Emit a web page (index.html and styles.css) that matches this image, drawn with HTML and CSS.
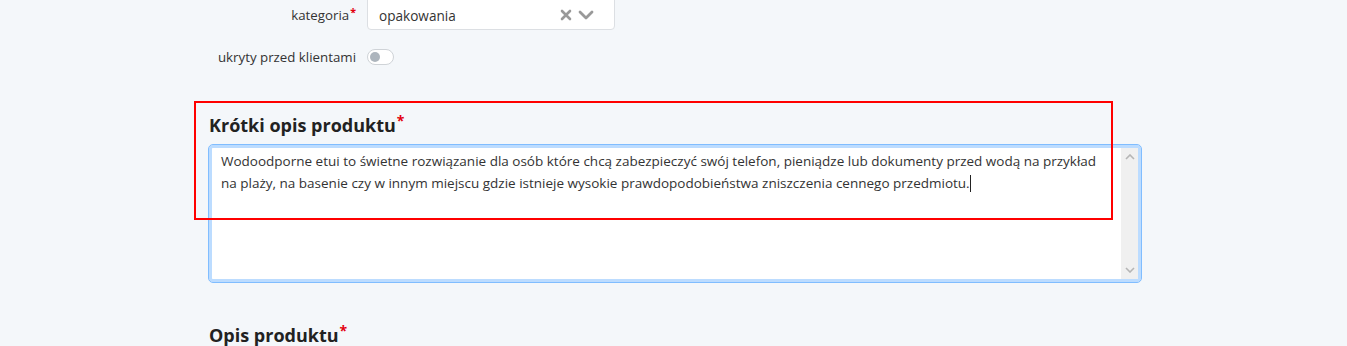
FILE: index.html
```html
<!DOCTYPE html>
<html lang="pl">
<head>
<meta charset="utf-8">
<link rel="stylesheet" href="styles.css">
</head>
<body>
<div class="page">
  <div class="row row-cat">
    <div class="label">kategoria<span class="req">*</span></div>
    <div class="select">
      <span class="select-value">opakowania</span>
      <span class="select-icons">
        <svg width="12" height="12" viewBox="0 0 12 12"><path d="M2 2 L10 10 M10 2 L2 10" stroke="#999" stroke-width="2.6" stroke-linecap="round"/></svg>
        <svg width="16" height="12" viewBox="0 0 16 12"><path d="M2 3 L8 9 L14 3" fill="none" stroke="#999" stroke-width="2.8" stroke-linecap="round" stroke-linejoin="round"/></svg>
      </span>
    </div>
  </div>
  <div class="row row-toggle">
    <div class="label">ukryty przed klientami</div>
    <div class="toggle"><span class="knob"></span></div>
  </div>

  <div class="section">
    <div class="annot"></div>
    <h2 class="heading">Krótki opis produktu<span class="req">*</span></h2>
    <div class="textarea">
      <div class="ta-text">Wodoodporne etui to świetne rozwiązanie dla osób które chcą zabezpieczyć swój telefon, pieniądze lub dokumenty przed wodą na przykład na plaży, na basenie czy w innym miejscu gdzie istnieje wysokie prawdopodobieństwa zniszczenia cennego przedmiotu.<span class="caret"></span></div>
      <div class="scrollbar">
        <svg width="10" height="6" viewBox="0 0 10 6"><path d="M1 5 L5 1 L9 5" fill="none" stroke="#b5b5b5" stroke-width="1.6"/></svg>
        <svg width="10" height="6" viewBox="0 0 10 6"><path d="M1 1 L5 5 L9 1" fill="none" stroke="#b5b5b5" stroke-width="1.6"/></svg>
      </div>
    </div>
  </div>

  <h2 class="heading heading-2">Opis produktu<span class="req">*</span></h2>
</div>
</body>
</html>
```

FILE: styles.css
```css
html, body {
  margin: 0;
  padding: 0;
}
body {
  background: #f4f7fa;
  font-family: "Open Sans", "Lato", sans-serif;
  color: #333;
  overflow: hidden;
}
.page {
  margin-left: 208px;
  width: 934px;
}
.row {
  display: flex;
  align-items: center;
}
.label {
  width: 159px;
  box-sizing: border-box;
  padding-right: 11px;
  text-align: right;
  font-size: 13.3px;
  color: #333;
}
.req {
  color: #e3000f;
  font-weight: 700;
  font-size: 0.8em;
  vertical-align: 4px;
  margin-left: 1px;
}
.row-cat {
  margin-top: -8px;
  height: 38px;
}
.row-cat .label {
  align-self: flex-start;
  line-height: 40px;
}
.select {
  width: 248px;
  height: 38px;
  box-sizing: border-box;
  background: #fff;
  border: 1px solid #dcdfe3;
  border-radius: 4px;
  display: flex;
  align-items: center;
  justify-content: space-between;
  padding: 8px 20px 0 11px;
}
.select-value {
  font-size: 13.6px;
  color: #333;
}
.select-icons {
  display: flex;
  align-items: center;
  gap: 6px;
}
.row-toggle {
  margin-top: 19px;
  height: 16px;
}
.toggle {
  width: 27px;
  height: 16px;
  box-sizing: border-box;
  border: 1px solid #cfd3d7;
  border-radius: 8px;
  background: #fff;
  display: flex;
  align-items: center;
  padding-left: 2px;
}
.knob {
  width: 10px;
  height: 10px;
  border-radius: 50%;
  background: #adb5bd;
}
.section {
  position: relative;
  margin-top: 44px;
}
.annot {
  position: absolute;
  left: -14px;
  top: -8px;
  width: 919px;
  height: 119px;
  box-sizing: border-box;
  border: 2px solid #ff0000;
  pointer-events: none;
  z-index: 2;
}
.heading {
  margin: 0;
  font-size: 18px;
  line-height: 24px;
  font-weight: 700;
  color: #222;
  padding-left: 1px;
}
.heading .req {
  font-size: 14px;
  vertical-align: 6px;
}
.textarea {
  margin-top: 7px;
  height: 139px;
  box-sizing: border-box;
  background: #fff;
  border: 1px solid #80bdff;
  border-radius: 5px;
  box-shadow: 0 0 0 3px #bcdcff inset;
  display: flex;
  position: relative;
}
.textarea::before {
  content: "";
  position: absolute;
  inset: 3px;
  background: #fff;
  border-radius: 2px;
}
.ta-text {
  position: relative;
  flex: 1;
  padding: 5px 10px 0 12px;
  font-size: 13.5px;
  line-height: 22px;
  color: #333;
}
.caret {
  display: inline-block;
  width: 1px;
  height: 17px;
  background: #222;
  vertical-align: -4px;
}
.scrollbar {
  position: relative;
  width: 17px;
  margin: 3px 3px 3px 0;
  background: #f0f0f0;
  display: flex;
  flex-direction: column;
  justify-content: space-between;
  align-items: center;
  padding: 6px 0;
  box-sizing: border-box;
}
.heading-2 {
  margin-top: 36px;
}
```
